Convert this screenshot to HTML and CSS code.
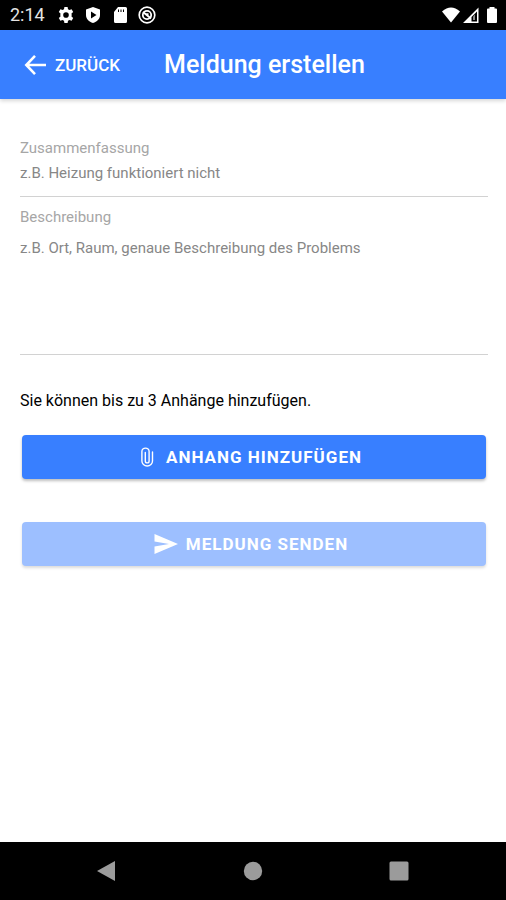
FILE: index.html
```html
<!DOCTYPE html>
<html lang="de">
<head>
<meta charset="utf-8">
<meta name="viewport" content="width=device-width, initial-scale=1">
<title>Meldung erstellen</title>
<link rel="stylesheet" href="styles.css">
</head>
<body>
<div class="status-bar">
  <div class="status-left">
    <span class="clock">2:14</span>
    <svg class="status-icon" viewBox="0 0 18 18" aria-hidden="true"><path fill="#fff" fill-rule="evenodd" d="M7.400 1h3.200l.4 2.200 1.500.9 2.100-.8 1.600 2.800-1.700 1.400a6 6 0 0 1 0 3l1.700 1.400-1.600 2.800-2.100-.8-1.500.9-.4 2.200H7.400l-.4-2.200-1.500-.9-2.100.8-1.600-2.800 1.700-1.400a6 6 0 0 1 0-3L1.800 6.100l1.600-2.800 2.100.8L7 3.200zM9 6.200a2.800 2.800 0 1 0 0 5.600 2.800 2.800 0 0 0 0-5.600z"/></svg>
    <svg class="status-icon" viewBox="0 0 18 18" aria-hidden="true"><path fill="#fff" fill-rule="evenodd" d="M9 1l7 2.500V9c0 4-3 6.800-7 8-4-1.200-7-4-7-8V3.500zM7 5.500v7L12.500 9z"/></svg>
    <svg class="status-icon" viewBox="0 0 18 18" aria-hidden="true"><path fill="#fff" fill-rule="evenodd" d="M7 1h7.500q1.500 0 1.500 1.500v13q0 1.500-1.500 1.500h-10Q3 17 3 15.500V6zM7 3.500v2.500h1v-2.500zm2.500 0v2.500h1v-2.500zm2.500 0v2.500h1v-2.500z"/></svg>
    <svg class="status-icon" viewBox="0 0 18 18" aria-hidden="true"><g fill="none" stroke="#fff"><circle cx="9" cy="9" r="7.800" stroke-width="1.700"/><circle cx="9" cy="9" r="4.200" stroke-width="1.800"/><path d="M5 6l8 6.500M7.500 8.200h3" stroke-width="2"/></g></svg>
  </div>
  <div class="status-right">
    <svg class="wifi" viewBox="0 0 20 18" aria-hidden="true"><path fill="#fff" d="M1 5.500Q10-2.500 19 5.500L10 16.500z"/></svg>
    <svg class="signal" viewBox="0 0 18 18" aria-hidden="true"><path fill="#fff" fill-rule="evenodd" d="M1 17L16.500 1.500V17zM9.500 11v4.500H15V5.500z"/><path d="M11 10.500l2-2V14h-2z" fill="#888"/></svg>
    <svg class="battery" viewBox="0 0 12 18" aria-hidden="true"><path fill="#fff" d="M3.500 1h5v1.500H10q1 0 1 1V16q0 1-1 1H2q-1 0-1-1V3.500q0-1 1-1h1.500z"/></svg>
  </div>
</div>
<header class="toolbar">
  <button class="back" type="button">
    <svg class="back-icon" viewBox="0 0 24 24" aria-hidden="true"><path fill="none" stroke="#fff" stroke-width="2.800" d="M24 12H3M12 2L2.500 12l9.500 10"/></svg>
    <span>ZURÜCK</span>
  </button>
  <h1 class="title">Meldung erstellen</h1>
</header>
<main class="content">
  <form class="form">
    <div class="field">
      <label class="label" for="summary">Zusammenfassung</label>
      <input class="control" id="summary" type="text" placeholder="z.B. Heizung funktioniert nicht">
    </div>
    <div class="field">
      <label class="label" for="description">Beschreibung</label>
      <textarea class="control control-area" id="description" placeholder="z.B. Ort, Raum, genaue Beschreibung des Problems"></textarea>
    </div>
    <p class="hint">Sie können bis zu 3 Anhänge hinzufügen.</p>
    <div class="actions">
      <button class="button" type="button">
        <svg class="clip-icon" viewBox="0 0 14 20" aria-hidden="true"><path fill="none" stroke="#fff" stroke-width="1.400" stroke-linecap="round" d="M12.500 5v9a5.300 5 0 0 1-10.600 0V4.500a3.600 3.400 0 0 1 7.200 0V14a1.900 1.900 0 0 1-3.800 0V5.500"/></svg>
        <span>ANHANG HINZUFÜGEN</span>
      </button>
      <button class="button" type="submit" disabled>
        <svg class="send-icon" viewBox="0 0 24 20" aria-hidden="true"><path fill="#fff" d="M.5 0L24 10 .5 20v-7.500L15 10 .5 7.500z"/></svg>
        <span>MELDUNG SENDEN</span>
      </button>
    </div>
  </form>
</main>
<nav class="system-nav" aria-label="System">
  <button class="nav-button" type="button" aria-label="Zurück"><svg class="nav-icon" viewBox="0 0 20 20" aria-hidden="true"><path fill="#9b9b9b" d="M0 10L18 0v20z"/></svg></button>
  <button class="nav-button" type="button" aria-label="Startseite"><svg class="nav-icon" viewBox="0 0 20 20" aria-hidden="true"><circle fill="#9b9b9b" cx="10" cy="10" r="9.200"/></svg></button>
  <button class="nav-button" type="button" aria-label="Übersicht"><svg class="nav-icon" viewBox="0 0 20 20" aria-hidden="true"><rect fill="#9b9b9b" x=".5" y=".5" width="19" height="19" rx="1.500"/></svg></button>
</nav>
</body>
</html>
```
FILE: styles.css
```css
* {
  box-sizing: border-box;
}

body {
  display: flex;
  flex-direction: column;
  min-height: 100vh;
  margin: 0;
  background: #fff;
  color: #000;
  font-family: Roboto, sans-serif;
}

button,
input,
textarea {
  margin: 0;
  padding: 0;
  border: 0;
  background: none;
  font-family: inherit;
}

svg {
  display: block;
  flex: none;
}

.status-bar {
  display: flex;
  align-items: center;
  justify-content: space-between;
  height: 30px;
  padding: 0 8px 0 10px;
  background: #000;
}

.status-left {
  display: flex;
  align-items: center;
  gap: 9px;
}

.clock {
  margin-right: 3px;
  color: #e4e4e4;
  font-size: 18px;
  line-height: 20px;
}

.status-icon,
.signal {
  width: 18px;
  height: 18px;
}

.status-right {
  display: flex;
  align-items: center;
}

.wifi {
  width: 20px;
  height: 18px;
}

.signal {
  margin-left: 1px;
}

.battery {
  width: 12px;
  height: 18px;
  margin-left: 6px;
}

.toolbar {
  display: flex;
  align-items: center;
  gap: 44px;
  height: 69px;
  padding: 0 24px;
  background: #387fff;
  color: #fff;
  box-shadow: 0 2px 4px rgba(0, 0, 0, 0.16);
}

.back {
  display: flex;
  align-items: center;
  gap: 9px;
  color: #fff;
  font-size: 17px;
  font-weight: 500;
  line-height: 24px;
}

.back-icon {
  width: 22px;
  height: 22px;
}

.title {
  margin: 0;
  font-size: 25px;
  font-weight: 500;
  line-height: 32px;
}

.content {
  flex: 1;
  padding: 40px 18px 24px 20px;
}

.field {
  display: flex;
  flex-direction: column;
  border-bottom: 1px solid #d2d2d2;
}

.field + .field {
  padding-top: 11px;
}

.label {
  color: #a6a6a6;
  font-size: 15px;
  line-height: 18px;
}

.control {
  width: 100%;
  height: 39px;
  padding-bottom: 7px;
  color: #000;
  font-size: 15px;
  line-height: 18px;
  outline: 0;
}

.control::placeholder {
  color: #878787;
  opacity: 1;
}

.control-area {
  display: block;
  height: 128px;
  padding-top: 13px;
  resize: none;
}

.hint {
  margin: 36px 0 24px;
  font-size: 16px;
  line-height: 20px;
}

.actions {
  display: flex;
  flex-direction: column;
  gap: 43px;
  padding: 0 2px;
}

.button {
  display: flex;
  align-items: center;
  justify-content: center;
  gap: 8px;
  width: 100%;
  height: 44px;
  padding-right: 6px;
  border-radius: 4px;
  background: #387fff;
  color: #fff;
  font-size: 17px;
  font-weight: 700;
  letter-spacing: 1px;
  line-height: 20px;
  box-shadow: 0 2px 3px rgba(0, 0, 0, 0.26);
}

.button:disabled {
  background: #9dbfff;
  box-shadow: 0 2px 3px rgba(0, 0, 0, 0.14);
}

.clip-icon {
  width: 14px;
  height: 20px;
  margin-right: 4px;
}

.send-icon {
  width: 24px;
  height: 20px;
}

.system-nav {
  display: grid;
  grid-template-columns: repeat(3, 1fr);
  height: 58px;
  padding: 0 34px;
  background: #000;
}

.nav-button {
  display: flex;
  align-items: center;
  justify-content: center;
}

.nav-icon {
  width: 20px;
  height: 20px;
}
```
